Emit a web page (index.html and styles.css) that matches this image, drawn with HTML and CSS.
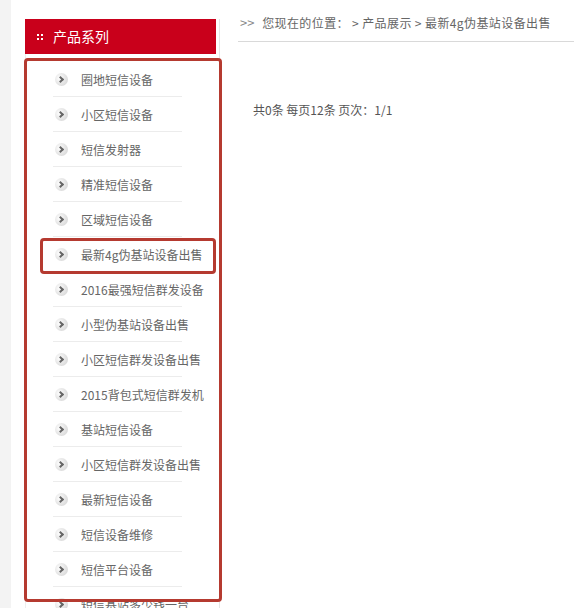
FILE: index.html
```html
<!DOCTYPE html>
<html lang="zh-CN">
<head>
  <meta charset="UTF-8">
  <meta name="viewport" content="width=device-width, initial-scale=1.0">
  <title>产品展示</title>
  <link rel="stylesheet" href="styles.css">
</head>
<body>

  <div class="page">
    <div class="strip"></div>

    <!-- 产品系列 -->
    <aside class="sidebar">
      <h2 class="side-title"><span class="dots"><i></i><i></i><i></i><i></i></span>产品系列</h2>
      <ul class="side-list">
        <li><span class="arrow"></span>圈地短信设备</li>
        <li><span class="arrow"></span>小区短信设备</li>
        <li><span class="arrow"></span>短信发射器</li>
        <li><span class="arrow"></span>精准短信设备</li>
        <li><span class="arrow"></span>区域短信设备</li>
        <li><span class="arrow"></span>最新4g伪基站设备出售</li>
        <li><span class="arrow"></span>2016最强短信群发设备</li>
        <li><span class="arrow"></span>小型伪基站设备出售</li>
        <li><span class="arrow"></span>小区短信群发设备出售</li>
        <li><span class="arrow"></span>2015背包式短信群发机</li>
        <li><span class="arrow"></span>基站短信设备</li>
        <li><span class="arrow"></span>小区短信群发设备出售</li>
        <li><span class="arrow"></span>最新短信设备</li>
        <li><span class="arrow"></span>短信设备维修</li>
        <li><span class="arrow"></span>短信平台设备</li>
        <li><span class="arrow"></span>短信基站多少钱一台</li>
      </ul>
    </aside>

    <!-- 内容 -->
    <main class="main">
      <div class="crumbs">
        <span class="crumb-mark">&gt;&gt;</span>
        <span class="crumb-text">您现在的位置： &gt; 产品展示 &gt; 最新4g伪基站设备出售</span>
      </div>
      <p class="pager">共0条 每页12条 页次：1/1</p>
    </main>
  </div>

  <!-- 标注框 -->
  <div class="mark mark-list"></div>
  <div class="mark mark-item"></div>

</body>
</html>
```

FILE: styles.css
```css
body {
  margin: 0;
  padding: 0;
  background: #fff;
  font-family: "Noto Sans CJK SC", "Liberation Sans", sans-serif;
  font-size: 12px;
  color: #666;
  overflow: hidden;
}

.page {
  display: flex;
  align-items: flex-start;
  height: 608px;
}

.strip {
  width: 11px;
  height: 100%;
  background: #f3f3f3;
  flex-shrink: 0;
}

.sidebar {
  width: 193px;
  margin-left: 14px;
  margin-top: 19px;
  border-right: 1px solid #e6e6e6;
  border-left: 1px solid #eee;
  flex-shrink: 0;
}

.side-title {
  margin: 0 3px 0 -1px;
  height: 35px;
  background: #c9001b;
  color: #fff;
  font-size: 14px;
  font-weight: normal;
  line-height: 35px;
  display: flex;
  align-items: center;
}

.dots {
  display: grid;
  grid-template-columns: 2px 2px;
  gap: 2px;
  margin: 0 10px 0 12px;
}

.dots i {
  width: 2px;
  height: 2px;
  background: #fff;
}

.side-list {
  list-style: none;
  margin: 0;
  padding: 8px 0 0;
}

.side-list li {
  display: flex;
  align-items: center;
  height: 34px;
  margin: 0 37px 0 27px;
  border-bottom: 1px solid #ececec;
  white-space: nowrap;
}

.arrow {
  position: relative;
  width: 13px;
  height: 13px;
  margin: 0 13px 0 2px;
  border-radius: 50%;
  background: radial-gradient(circle at 35% 40%, #fff 0%, #e8e8e8 45%, #cfcfcf 100%);
  flex-shrink: 0;
}

.arrow::after {
  content: "";
  position: absolute;
  left: 3px;
  top: 4px;
  width: 3px;
  height: 3px;
  border-top: 2px solid #666;
  border-right: 2px solid #666;
  transform: rotate(45deg);
}

.main {
  flex: 1;
  margin-left: 18px;
}

.crumbs {
  margin-top: 13px;
  height: 28px;
  padding-left: 2px;
  border-bottom: 1px solid #d9d9d9;
  line-height: 20px;
  white-space: nowrap;
}

.crumb-mark {
  color: #888;
  font-size: 13px;
  margin-right: 5px;
}

.crumb-text {
  letter-spacing: 0.4px;
}

.pager {
  margin: 58px 0 0 15px;
  line-height: 20px;
  color: #555;
}

.mark {
  position: absolute;
  border: 3px solid #b53a30;
  border-radius: 4px;
}

.mark-list {
  left: 24px;
  top: 58px;
  width: 192px;
  height: 538px;
}

.mark-item {
  left: 40px;
  top: 238px;
  width: 170px;
  height: 30px;
}
```
